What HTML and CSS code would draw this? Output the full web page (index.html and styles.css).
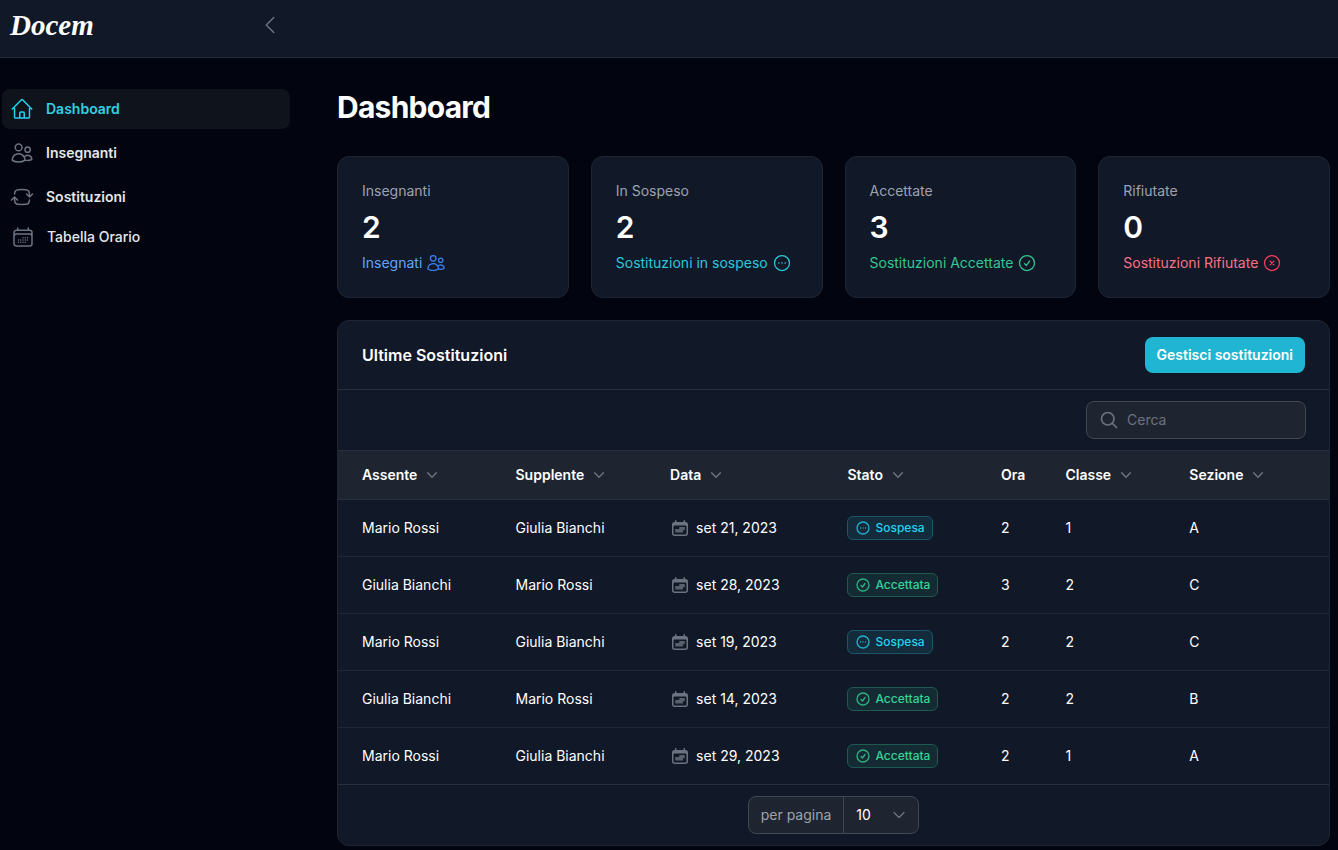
FILE: index.html
```html
<!DOCTYPE html>
<html lang="it">

<head>
    <meta charset="UTF-8">
    <meta name="viewport" content="width=device-width, initial-scale=1.0">
    <link rel="stylesheet" href="styles.css">
    <title>Dashboard - Docem</title>
</head>

<body>

    <!-- Icons -->
    <svg class="sprite" aria-hidden="true">
        <symbol id="home" viewBox="0 0 24 24">
            <path d="M2.25 12l8.954-8.955c.44-.439 1.152-.439 1.591 0L21.75 12M4.5 9.75v10.125c0 .621.504 1.125 1.125 1.125H9.75v-4.875c0-.621.504-1.125 1.125-1.125h2.25c.621 0 1.125.504 1.125 1.125V21h4.125c.621 0 1.125-.504 1.125-1.125V9.75M8.25 21h8.25" />
        </symbol>
        <symbol id="users" viewBox="0 0 24 24">
            <path d="M15 19.128a9.38 9.38 0 002.625.372 9.337 9.337 0 004.121-.952 4.125 4.125 0 00-7.533-2.493M15 19.128v-.003c0-1.113-.285-2.16-.786-3.07M15 19.128v.106A12.318 12.318 0 018.624 21c-2.331 0-4.512-.645-6.374-1.766l-.001-.109a6.375 6.375 0 0111.964-3.07M12 6.375a3.375 3.375 0 11-6.75 0 3.375 3.375 0 016.75 0zm8.25 2.25a2.625 2.625 0 11-5.25 0 2.625 2.625 0 015.25 0z" />
        </symbol>
        <symbol id="swap" viewBox="0 0 24 24">
            <path d="M19.5 12c0-1.232-.046-2.453-.138-3.662a4.006 4.006 0 00-3.7-3.7 48.678 48.678 0 00-7.324 0 4.006 4.006 0 00-3.7 3.7c-.017.22-.032.441-.046.662M19.5 12l3-3m-3 3l-3-3m-12 3c0 1.232.046 2.453.138 3.662a4.006 4.006 0 003.7 3.7 48.656 48.656 0 007.324 0 4.006 4.006 0 003.7-3.7c.017-.22.032-.441.046-.662M4.5 12l3 3m-3-3l-3 3" />
        </symbol>
        <symbol id="calendar" viewBox="0 0 24 24">
            <path d="M6.75 3v2.25M17.25 3v2.25M3 18.75V7.5a2.25 2.25 0 012.25-2.25h13.5A2.25 2.25 0 0121 7.5v11.25m-18 0A2.25 2.25 0 005.25 21h13.5A2.25 2.25 0 0021 18.75m-18 0v-7.5A2.25 2.25 0 015.25 9h13.5A2.25 2.25 0 0121 11.25v7.5m-9-6h.008v.008H12v-.008zM12 15h.008v.008H12V15zm0 2.25h.008v.008H12v-.008zM9.75 15h.008v.008H9.75V15zm0 2.25h.008v.008H9.75v-.008zM7.5 15h.008v.008H7.5V15zm0 2.25h.008v.008H7.5v-.008zm6.75-4.5h.008v.008h-.008v-.008zm0 2.25h.008v.008h-.008V15zm0 2.25h.008v.008h-.008v-.008zm2.25-4.5h.008v.008H16.5v-.008zm0 2.25h.008v.008H16.5V15z" />
        </symbol>
        <symbol id="calendar-solid" viewBox="0 0 20 20">
            <path fill="currentColor" stroke="none" fill-rule="evenodd" d="M5.75 2a.75.75 0 01.75.75V4h7V2.75a.75.75 0 011.5 0V4h.25A2.75 2.75 0 0118 6.75v8.5A2.75 2.75 0 0115.25 18H4.75A2.75 2.75 0 012 15.25v-8.5A2.75 2.75 0 014.75 4H5V2.75A.75.75 0 015.75 2zm-1 5.5c-.69 0-1.25.56-1.25 1.25v6.5c0 .69.56 1.25 1.25 1.25h10.5c.69 0 1.25-.56 1.25-1.25v-6.5c0-.69-.56-1.25-1.25-1.25H4.75z" />
            <path fill="currentColor" stroke="none" opacity="0.8" d="M9.25 9h5.5v3.2h-1.8V14.6H5.25v-3.6h4z" />
        </symbol>
        <symbol id="dots" viewBox="0 0 24 24">
            <circle cx="12" cy="12" r="9" />
            <path d="M8.25 12h.01M12 12h.01M15.75 12h.01" stroke-width="2" />
        </symbol>
        <symbol id="check" viewBox="0 0 24 24">
            <circle cx="12" cy="12" r="9" />
            <path d="M9 12.75L11.25 15 15 9.75" />
        </symbol>
        <symbol id="cross" viewBox="0 0 24 24">
            <circle cx="12" cy="12" r="9" />
            <path d="M9.75 9.75l4.5 4.5m0-4.5l-4.5 4.5" />
        </symbol>
        <symbol id="search" viewBox="0 0 24 24">
            <path d="M21 21l-5.197-5.197m0 0A7.5 7.5 0 105.196 5.196a7.5 7.5 0 0010.607 10.607z" />
        </symbol>
        <symbol id="left" viewBox="0 0 24 24">
            <path d="M15.75 19.5L8.25 12l7.5-7.5" />
        </symbol>
        <symbol id="down" viewBox="0 0 24 24">
            <path d="M19.5 8.25l-7.5 7.5-7.5-7.5" />
        </symbol>
    </svg>

    <header class="topbar">
        <div class="brand">
            <a class="logo" href="#">Docem</a>
            <button class="collapse" type="button" aria-label="Comprimi menu"><svg class="icon icon-lg"><use href="#left" /></svg></button>
        </div>
    </header>

    <div class="layout">
        <nav class="sidebar">
            <a class="nav-item active" href="#"><svg class="icon icon-lg"><use href="#home" /></svg>Dashboard</a>
            <a class="nav-item" href="#"><svg class="icon icon-lg"><use href="#users" /></svg>Insegnanti</a>
            <a class="nav-item" href="#"><svg class="icon icon-lg"><use href="#swap" /></svg>Sostituzioni</a>
            <a class="nav-item plain" href="#"><svg class="icon icon-lg"><use href="#calendar" /></svg>Tabella Orario</a>
        </nav>

        <main>
            <h1>Dashboard</h1>

            <section class="stats">
                <div class="stat">
                    <div class="stat-label">Insegnanti</div>
                    <div class="stat-value">2</div>
                    <div class="stat-desc blue">Insegnati <svg class="icon"><use href="#users" /></svg></div>
                </div>
                <div class="stat">
                    <div class="stat-label">In Sospeso</div>
                    <div class="stat-value">2</div>
                    <div class="stat-desc cyan">Sostituzioni in sospeso <svg class="icon"><use href="#dots" /></svg></div>
                </div>
                <div class="stat">
                    <div class="stat-label">Accettate</div>
                    <div class="stat-value">3</div>
                    <div class="stat-desc green">Sostituzioni Accettate <svg class="icon"><use href="#check" /></svg></div>
                </div>
                <div class="stat">
                    <div class="stat-label">Rifiutate</div>
                    <div class="stat-value">0</div>
                    <div class="stat-desc red">Sostituzioni Rifiutate <svg class="icon"><use href="#cross" /></svg></div>
                </div>
            </section>

            <section class="panel">
                <div class="panel-header">
                    <h2>Ultime Sostituzioni</h2>
                    <button class="btn" type="button">Gestisci sostituzioni</button>
                </div>

                <div class="toolbar">
                    <label class="search">
                        <svg class="icon"><use href="#search" /></svg>
                        <input type="search" placeholder="Cerca" aria-label="Cerca">
                    </label>
                </div>

                <table>
                    <colgroup>
                        <col class="c-assente">
                        <col class="c-supplente">
                        <col class="c-data">
                        <col class="c-stato">
                        <col class="c-ora">
                        <col class="c-classe">
                        <col>
                    </colgroup>
                    <thead>
                        <tr>
                            <th><button type="button">Assente <svg class="icon icon-xs"><use href="#down" /></svg></button></th>
                            <th><button type="button">Supplente <svg class="icon icon-xs"><use href="#down" /></svg></button></th>
                            <th><button type="button">Data <svg class="icon icon-xs"><use href="#down" /></svg></button></th>
                            <th><button type="button">Stato <svg class="icon icon-xs"><use href="#down" /></svg></button></th>
                            <th>Ora</th>
                            <th><button type="button">Classe <svg class="icon icon-xs"><use href="#down" /></svg></button></th>
                            <th><button type="button">Sezione <svg class="icon icon-xs"><use href="#down" /></svg></button></th>
                        </tr>
                    </thead>
                    <tbody>
                        <tr>
                            <td>Mario Rossi</td>
                            <td>Giulia Bianchi</td>
                            <td><div class="date"><svg class="icon"><use href="#calendar-solid" /></svg>set 21, 2023</div></td>
                            <td><span class="badge sospesa"><svg class="icon icon-sm"><use href="#dots" /></svg>Sospesa</span></td>
                            <td>2</td>
                            <td>1</td>
                            <td>A</td>
                        </tr>
                        <tr>
                            <td>Giulia Bianchi</td>
                            <td>Mario Rossi</td>
                            <td><div class="date"><svg class="icon"><use href="#calendar-solid" /></svg>set 28, 2023</div></td>
                            <td><span class="badge accettata"><svg class="icon icon-sm"><use href="#check" /></svg>Accettata</span></td>
                            <td>3</td>
                            <td>2</td>
                            <td>C</td>
                        </tr>
                        <tr>
                            <td>Mario Rossi</td>
                            <td>Giulia Bianchi</td>
                            <td><div class="date"><svg class="icon"><use href="#calendar-solid" /></svg>set 19, 2023</div></td>
                            <td><span class="badge sospesa"><svg class="icon icon-sm"><use href="#dots" /></svg>Sospesa</span></td>
                            <td>2</td>
                            <td>2</td>
                            <td>C</td>
                        </tr>
                        <tr>
                            <td>Giulia Bianchi</td>
                            <td>Mario Rossi</td>
                            <td><div class="date"><svg class="icon"><use href="#calendar-solid" /></svg>set 14, 2023</div></td>
                            <td><span class="badge accettata"><svg class="icon icon-sm"><use href="#check" /></svg>Accettata</span></td>
                            <td>2</td>
                            <td>2</td>
                            <td>B</td>
                        </tr>
                        <tr>
                            <td>Mario Rossi</td>
                            <td>Giulia Bianchi</td>
                            <td><div class="date"><svg class="icon"><use href="#calendar-solid" /></svg>set 29, 2023</div></td>
                            <td><span class="badge accettata"><svg class="icon icon-sm"><use href="#check" /></svg>Accettata</span></td>
                            <td>2</td>
                            <td>1</td>
                            <td>A</td>
                        </tr>
                    </tbody>
                </table>

                <div class="panel-footer">
                    <div class="per-page">
                        <label for="perPage">per pagina</label>
                        <div class="select-wrap">
                            <select id="perPage">
                                <option>5</option>
                                <option selected>10</option>
                                <option>25</option>
                                <option>50</option>
                            </select>
                            <svg class="icon icon-sm"><use href="#down" /></svg>
                        </div>
                    </div>
                </div>
            </section>
        </main>
    </div>

</body>

</html>
```
FILE: styles.css
```css
* {
    box-sizing: border-box;
}

body {
    margin: 0;
    min-height: 100vh;
    background-color: #02050f;
    color: white;
    font-family: Inter, sans-serif;
    font-size: 14px;
    line-height: 20px;
}

a {
    color: inherit;
    text-decoration: none;
}

button,
input,
select {
    margin: 0;
    padding: 0;
    border: 0;
    background: none;
    color: inherit;
    font: inherit;
}

h1,
h2 {
    margin: 0;
}

.sprite {
    display: none;
}

.icon {
    width: 20px;
    height: 20px;
    flex: none;
    fill: none;
    stroke: currentColor;
    stroke-width: 1.5;
    stroke-linecap: round;
    stroke-linejoin: round;
}

.icon-lg {
    width: 24px;
    height: 24px;
}

.icon-sm {
    width: 16px;
    height: 16px;
}

.icon-xs {
    width: 14px;
    height: 14px;
    stroke-width: 2.5;
}

/* Top bar */
.topbar {
    height: 58px;
    background-color: #111827;
    border-bottom: 1px solid #252b39;
}

.brand {
    display: flex;
    align-items: center;
    justify-content: space-between;
    width: 290px;
    height: 50px;
    padding: 0 8px 0 10px;
}

.logo {
    font-family: Satisfy, "Liberation Serif", cursive;
    font-size: 29px;
    font-style: italic;
    font-weight: bold;
    line-height: 40px;
}

.collapse {
    display: flex;
    color: #6b7280;
}

/* Layout */
.layout {
    display: flex;
}

.sidebar {
    display: flex;
    flex-direction: column;
    flex: none;
    width: 290px;
    padding: 31px 0 0 2px;
}

.nav-item {
    display: flex;
    align-items: center;
    gap: 12px;
    height: 40px;
    margin-bottom: 4px;
    padding: 0 8px;
    border-radius: 8px;
    color: #e5e7eb;
    font-weight: 600;
}

.nav-item .icon {
    color: #6b7280;
}

.nav-item.active {
    background-color: #0f131b;
    color: #33cfe2;
}

.nav-item.active .icon {
    color: #22d3ee;
}

.nav-item.plain {
    margin-top: -4px;
    padding: 0 9px;
    font-weight: 500;
}

main {
    flex: 1;
    min-width: 0;
    padding: 31px 8px 4px 47px;
}

h1 {
    font-size: 30px;
    font-weight: 700;
    line-height: 36px;
    letter-spacing: -0.025em;
}

/* Stats */
.stats {
    display: grid;
    grid-template-columns: repeat(4, 1fr);
    gap: 22px;
    margin: 31px 0 22px;
}

.stat {
    display: flex;
    flex-direction: column;
    gap: 8px;
    padding: 24px;
    border: 1px solid #1f2532;
    border-radius: 12px;
    background-color: #111827;
}

.stat-label {
    color: #9ca3af;
}

.stat-value {
    font-size: 30px;
    font-weight: 600;
    line-height: 36px;
}

.stat-desc {
    display: flex;
    align-items: center;
    gap: 4px;
}

.blue {
    color: #60a5fa;
}

.blue .icon {
    color: #3b82f6;
}

.cyan {
    color: #2cc8dc;
}

.green {
    color: #34c795;
}

.red {
    color: #fb7185;
}

.red .icon {
    color: #f43f5e;
}

/* Panel */
.panel {
    overflow: hidden;
    border: 1px solid #1f2532;
    border-radius: 12px;
    background-color: #111827;
}

.panel-header {
    display: flex;
    align-items: center;
    justify-content: space-between;
    padding: 16px 24px;
    border-bottom: 1px solid #292f3d;
}

h2 {
    font-size: 16px;
    font-weight: 600;
    line-height: 24px;
}

.btn {
    height: 36px;
    padding: 0 12px;
    border-radius: 8px;
    background-color: #20b5d3;
    font-weight: 600;
    cursor: pointer;
}

.toolbar {
    display: flex;
    justify-content: flex-end;
    padding: 11px 23px;
}

.search {
    display: flex;
    align-items: center;
    gap: 8px;
    width: 220px;
    height: 38px;
    padding: 0 12px;
    border: 1px solid #414752;
    border-radius: 8px;
    background-color: #1f2530;
    color: #6b7280;
}

.search .icon {
    stroke-width: 2;
}

.search input {
    flex: 1;
    min-width: 0;
    outline: none;
    color: white;
}

.search input::placeholder {
    color: #6b7280;
    opacity: 1;
}

/* Table */
table {
    width: 100%;
    table-layout: fixed;
    border-collapse: collapse;
}

.c-assente {
    width: 16.7%;
}

.c-supplente {
    width: 15.6%;
}

.c-data {
    width: 17.9%;
}

.c-stato {
    width: 15.5%;
}

.c-ora {
    width: 6.5%;
}

.c-classe {
    width: 12.5%;
}

th,
td {
    padding: 0 12px;
    text-align: left;
}

th:first-child,
td:first-child {
    padding-left: 24px;
}

th {
    height: 49px;
    border-top: 1px solid #292f3d;
    border-bottom: 1px solid #292f3d;
    background-color: #1e2530;
    font-weight: 600;
}

th button {
    display: flex;
    align-items: center;
    gap: 8px;
    cursor: pointer;
}

th .icon {
    color: #6b7280;
}

td {
    height: 57px;
    border-bottom: 1px solid #1f2635;
}

tr:last-child td {
    border-bottom-color: #292f3d;
}

.date {
    display: flex;
    align-items: center;
    gap: 6px;
}

.date .icon {
    color: #6b7280;
}

.badge {
    display: inline-flex;
    align-items: center;
    gap: 4px;
    height: 24px;
    padding: 0 7px;
    border: 1px solid;
    border-radius: 6px;
    font-size: 12px;
    font-weight: 500;
    line-height: 16px;
    vertical-align: middle;
}

.sospesa {
    border-color: #1b5768;
    background-color: #132b3b;
    color: #22d3ee;
}

.accettata {
    border-color: #1f5a50;
    background-color: #142b33;
    color: #34d399;
}

.badge .icon {
    opacity: 0.8;
    stroke-width: 2;
}

/* Footer */
.panel-footer {
    display: flex;
    justify-content: center;
    padding: 11px 24px;
}

.per-page {
    display: flex;
    align-items: center;
    height: 38px;
    border: 1px solid #414752;
    border-radius: 8px;
    background-color: #1f2530;
}

.per-page label {
    padding: 0 12px;
    color: #9ca3af;
}

.select-wrap {
    display: grid;
    align-items: center;
    height: 36px;
    border-left: 1px solid #414752;
}

.select-wrap select,
.select-wrap .icon {
    grid-area: 1 / 1;
}

.select-wrap select {
    appearance: none;
    width: 74px;
    height: 36px;
    padding-left: 12px;
    outline: none;
}

.select-wrap option {
    background-color: #1f2530;
}

.select-wrap .icon {
    justify-self: end;
    margin-right: 11px;
    color: #6b7280;
    stroke-width: 2;
    pointer-events: none;
}
```
